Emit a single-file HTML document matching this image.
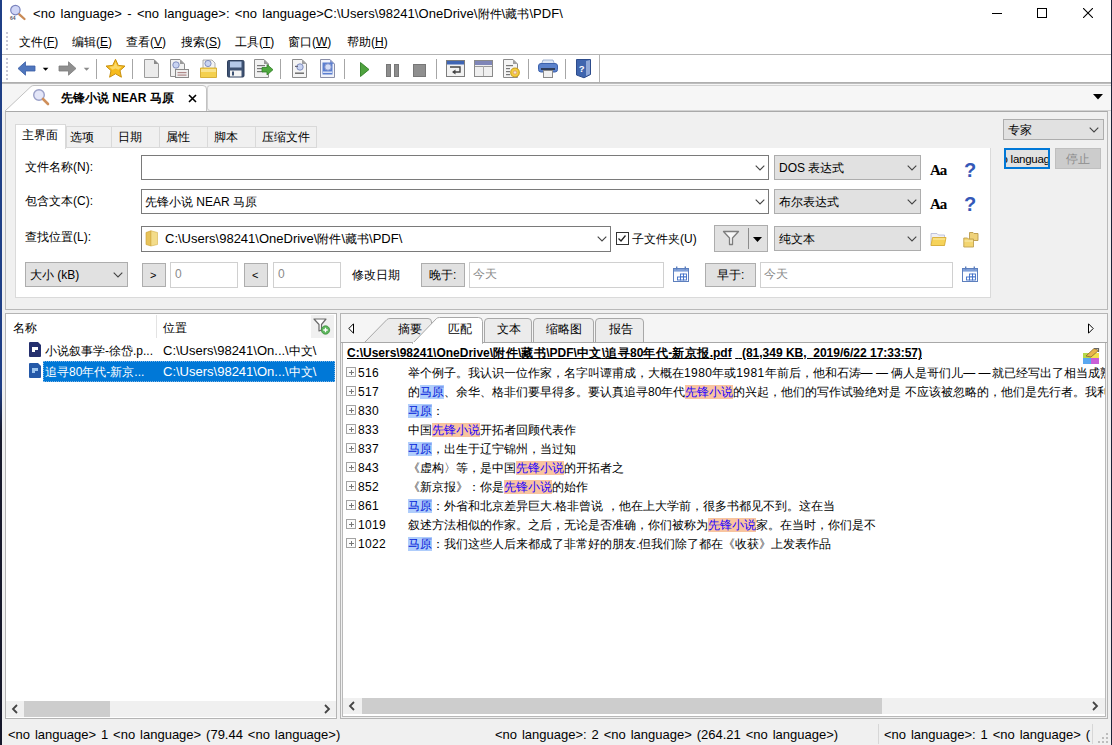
<!DOCTYPE html>
<html><head><meta charset="utf-8">
<style>
*{box-sizing:border-box;margin:0;padding:0}
html,body{width:1112px;height:745px;overflow:hidden;background:#fff}
body{position:relative;font-family:"Liberation Sans",sans-serif;font-size:12px;color:#000}
.a{position:absolute}
.t{position:absolute;white-space:nowrap;line-height:16px;height:16px}
.cb{position:absolute;background:#e1e1e1;border:1px solid #adadad}
.in{position:absolute;background:#fff;border:1px solid #7a7a7a}
.in2{position:absolute;background:#fff;border:1px solid #d0d0d0}
.btn{position:absolute;background:#e1e1e1;border:1px solid #adadad;text-align:center}
.chev{position:absolute;width:10px;height:6px}
.row{position:absolute;left:347px;height:19px;white-space:nowrap;font-size:12px;line-height:19px}
.hb{background:#afcdfb;color:#0018d8;font-weight:normal}
.ho{background:#f8c49f;color:#2200ff;font-weight:normal}
.pl{position:absolute;left:346px;width:10px;height:10px;border:1px solid #a3a3a3;background:#fcfcfc}
.pl:before{content:"";position:absolute;left:2px;top:3.500px;width:5px;height:1.500px;background:#777}
.pl:after{content:"";position:absolute;left:3.500px;top:2px;width:1.500px;height:5px;background:#777}
.num{position:absolute;left:358px;font-size:12px;line-height:14px;white-space:nowrap;letter-spacing:.3px}
.tx{position:absolute;left:408px;font-size:12px;line-height:15px;height:15px;white-space:nowrap}
i{font-style:normal;font-size:12px}
.k{letter-spacing:.45px}
</style></head><body>
<!-- window edges -->
<div class="a" style="left:0;top:0;width:2px;height:745px;background:linear-gradient(#1f3f86 0,#1f3f86 52%,#181a2c 58%,#15172a 100%)"></div>
<div class="a" style="left:1111px;top:0;width:1px;height:745px;background:#1b2438"></div>

<!-- title bar -->
<svg class="a" style="left:9px;top:4px" width="18" height="18" viewBox="0 0 18 18"><circle cx="6.400" cy="6.100" r="4.700" fill="#d0d6f6" stroke="#7a83bd" stroke-width="1.200"/><path d="M10.300 10.300 L15.500 15" stroke="#c98a55" stroke-width="2.300" stroke-linecap="round"/><text x="1" y="16" font-size="5" font-family="Liberation Sans" font-weight="bold" fill="#556">64</text></svg>
<div class="t" id="title" style="left:33px;top:5.500px;font-size:13px;letter-spacing:0.05px"><span style="word-spacing:1.6px">&lt;no language&gt; - &lt;no language&gt;: &lt;no language&gt;</span>C:\Users\98241\OneDrive\<i>附件</i>\<i>藏书</i>\PDF\</div>
<div class="a" style="left:992px;top:13px;width:10px;height:1px;background:#000"></div>
<div class="a" style="left:1037px;top:8px;width:10px;height:10px;border:1px solid #000"></div>
<svg class="a" style="left:1083px;top:8px" width="10" height="10"><path d="M0 0L10 10M10 0L0 10" stroke="#000" stroke-width="1.1"/></svg>

<!-- menu bar -->
<div class="a" style="left:6px;top:32px;width:2px;height:20px;background:repeating-linear-gradient(#c9c9d6 0,#c9c9d6 2px,#fff 2px,#fff 4px)"></div>
<div class="t" style="left:19px;top:34px">文件(<u>F</u>)</div>
<div class="t" style="left:72px;top:34px">编辑(<u>E</u>)</div>
<div class="t" style="left:126px;top:34px">查看(<u>V</u>)</div>
<div class="t" style="left:181px;top:34px">搜索(<u>S</u>)</div>
<div class="t" style="left:235px;top:34px">工具(<u>T</u>)</div>
<div class="t" style="left:288px;top:34px">窗口(<u>W</u>)</div>
<div class="t" style="left:347px;top:34px">帮助(<u>H</u>)</div>
<div class="a" style="left:2px;top:54px;width:1109px;height:1px;background:#b4b4b4"></div>

<!-- toolbar -->
<div class="a" style="left:2px;top:82px;width:1109px;height:2px;background:linear-gradient(#a8a8a8,#c4c4c4)"></div>
<div class="a" style="left:599px;top:55px;width:1px;height:27px;background:#b4b4b4"></div>
<div class="a" style="left:6px;top:58px;width:2px;height:22px;background:repeating-linear-gradient(#c9c9d6 0,#c9c9d6 2px,#fff 2px,#fff 4px)"></div>
<svg class="a" style="left:0;top:55px" width="600" height="27" viewBox="0 55 600 27">
<!-- back -->
<path d="M18 68.5L25.5 61.8V66H35V71H25.5V75.2Z" fill="#4f76bd" stroke="#3a5ea6" stroke-width=".8" stroke-linejoin="round"/>
<path d="M42.8 67.8H48.4L45.6 70.8Z" fill="#000"/>
<path d="M76 68.5L68.5 61.8V66H59V71H68.5V75.2Z" fill="#8f8f8f" stroke="#7c7c7c" stroke-width=".8" stroke-linejoin="round"/>
<path d="M83.8 67.8H89.4L86.6 70.8Z" fill="#8a8a8a"/>
<g fill="#a6a6a6"><rect x="96" y="59" width="1" height="20"/><rect x="132" y="59" width="1" height="20"/><rect x="280" y="59" width="1" height="20"/><rect x="344" y="59" width="1" height="20"/><rect x="436" y="59" width="1" height="20"/><rect x="528" y="59" width="1" height="20"/><rect x="565" y="59" width="1" height="20"/></g>
<!-- star -->
<path d="M115.5 59.3L118.3 65.4L125 66.1L120 70.6L121.4 77.2L115.5 73.8L109.6 77.2L111 70.6L106 66.1L112.7 65.4Z" fill="#f6bb1c" stroke="#c8900f" stroke-width="1" stroke-linejoin="round"/>
<path d="M115.5 62L117.4 66.3L121.8 66.8L118.5 69.8L115.5 68.5L112.5 69.8L109.2 66.8L113.6 66.3Z" fill="#fbd968"/>
<!-- new doc -->
<path d="M144.5 59.5H154L158.5 64V77.5H144.5Z" fill="#ececec" stroke="#9c9c9c"/><path d="M154 59.5V64H158.5Z" fill="#8a8a8a"/>
<!-- doc mag -->
<path d="M170.5 59.5H180L184.5 64V76.5H170.5Z" fill="#f1f1f1" stroke="#8e8e8e"/><path d="M180 59.5V64H184.5Z" fill="#9a9a9a"/>
<circle cx="176" cy="65" r="3.2" fill="#c9d4f2" stroke="#7785b8" stroke-width=".9"/>
<rect x="175.500" y="69.500" width="13" height="8" fill="#efefef" stroke="#8a8a8a"/><rect x="177.500" y="72" width="9" height="1.200" fill="#b08a8a"/><rect x="177.500" y="74.500" width="9" height="1.200" fill="#b08a8a"/>
<!-- folder mag -->
<path d="M203 60H212L215 63V70H203Z" fill="#f3f3f3" stroke="#999" stroke-width=".8"/>
<circle cx="208" cy="63.500" r="3.100" fill="#c9d4f2" stroke="#7785b8" stroke-width=".9"/>
<path d="M200.500 68H216.500V77.500H200.500Z" fill="#f4d04e" stroke="#d2a92c" stroke-width=".9"/><path d="M201 69H216V72H201Z" fill="#f9e38c"/>
<!-- save -->
<rect x="227.500" y="60.500" width="16.500" height="16.500" rx="1.200" fill="#3e5273" stroke="#2e3f5c"/>
<rect x="230" y="61.500" width="11.500" height="6" fill="#b4c8e8"/><rect x="230" y="70.500" width="11.500" height="6" fill="#f4f4f4"/><rect x="232" y="71.500" width="2" height="4" fill="#3e5273"/>
<!-- export -->
<path d="M254.500 59.500H264L268.500 64V77.500H254.500Z" fill="#f1f1f1" stroke="#8e8e8e"/><path d="M264 59.500V64H268.500Z" fill="#9a9a9a"/>
<rect x="257" y="65" width="8" height="1.200" fill="#777"/><rect x="257" y="68" width="6" height="1.200" fill="#777"/><rect x="257" y="71" width="6" height="1.200" fill="#777"/>
<path d="M262 67.500H267V64.500L273 69.700L267 75V72H262Z" fill="#4ea83e" stroke="#2f7f25" stroke-width=".8" stroke-linejoin="round"/>
<!-- preview 1 -->
<path d="M292.500 59.500H302L306.500 64V77.500H292.500Z" fill="#f4f4f4" stroke="#8a8a8a"/><path d="M302 59.500V64H306.500Z" fill="#a0a0a0"/>
<circle cx="300" cy="67" r="3.200" fill="#c9d4f2" stroke="#7785b8" stroke-width=".9"/><rect x="295" y="72.500" width="9" height="1.400" fill="#666"/><rect x="295" y="65.800" width="3" height="1.200" fill="#667"/>
<!-- preview 2 -->
<path d="M320.500 59.500H330L334.500 64V77.500H320.500Z" fill="#f1f3fa" stroke="#8a8fa8"/><path d="M330 59.500V64H334.500Z" fill="#8b9acb"/>
<rect x="322.500" y="62.500" width="10" height="12" fill="#5b7fd0"/><circle cx="328" cy="67" r="3.200" fill="#d4ddf6" stroke="#8795c8" stroke-width=".9"/><rect x="323" y="71.500" width="9" height="1.400" fill="#e4e9f8"/>
<!-- play pause stop -->
<path d="M360.500 62.500V76.500L369 69.500Z" fill="#4fa33f" stroke="#2f7f25" stroke-width=".9" stroke-linejoin="round"/>
<rect x="386.500" y="64.500" width="4" height="12" fill="#8d8d8d" stroke="#777"/><rect x="394.500" y="64.500" width="4" height="12" fill="#8d8d8d" stroke="#777"/>
<rect x="413.500" y="64.500" width="12" height="12" fill="#8f8f8f" stroke="#777"/>
<!-- window 1 -->
<rect x="446.500" y="60.500" width="18" height="16" fill="#f2f2f2" stroke="#7d7d7d"/><rect x="447" y="61" width="17" height="3.500" fill="#3f65b4"/>
<path d="M450 67H460V72H453" fill="none" stroke="#444" stroke-width="1.400"/><path d="M455.500 69.500L452 72L455.500 74.500Z" fill="#444"/>
<!-- window 2 -->
<rect x="474.500" y="60.500" width="18" height="16" fill="#f0f0f0" stroke="#8a8a8a"/><rect x="475" y="61" width="17" height="4" fill="#7f86b8"/><rect x="475" y="66" width="17" height="1" fill="#999"/><rect x="483" y="66" width="1" height="10" fill="#aaa"/>
<!-- doc gear -->
<path d="M503.500 59.500H513L517.500 64V77.500H503.500Z" fill="#f4f4f4" stroke="#8a8a8a"/><path d="M513 59.500V64H517.500Z" fill="#a0a0a0"/>
<rect x="506" y="65" width="7" height="1.200" fill="#777"/><rect x="506" y="68" width="4" height="1.200" fill="#777"/><rect x="506" y="71" width="4" height="1.200" fill="#777"/><rect x="506" y="74" width="4" height="1.200" fill="#777"/>
<circle cx="515" cy="72.500" r="4.300" fill="#f3cf3f" stroke="#d2a41f" stroke-width="1.200"/><circle cx="515" cy="72.500" r="1.700" fill="#f7e9c8" stroke="#d98b6a" stroke-width=".7"/>
<!-- printer -->
<path d="M543 60H553L554.500 64H541.500Z" fill="#dde6f4" stroke="#8ea2c8" stroke-width=".8"/>
<rect x="538.500" y="63.500" width="19" height="8.500" rx="2.500" fill="#5b82cc" stroke="#3d62ac"/><rect x="541" y="68" width="14" height="2" fill="#2e3e5c"/>
<rect x="543.500" y="70.500" width="9" height="7" fill="#f1f1f1" stroke="#8a8a8a"/>
<!-- help book -->
<path d="M576.500 59.500H590.500V74.500L584 77.800L576.500 75Z" fill="#3f65ae" stroke="#2d4c8c" stroke-linejoin="round"/><path d="M586 61L590 60V74L586 76Z" fill="#8fa8d8"/>
<text x="578.800" y="72" font-family="Liberation Sans" font-weight="bold" font-size="9.500" fill="#fff">?</text>
</svg>


<!-- tab strip -->
<div class="a" style="left:2px;top:84px;width:1109px;height:27px;background:#f5f5f5"></div>
<svg class="a" style="left:2px;top:84px" width="210" height="28" viewBox="0 0 210 28"><path d="M2.5 27.5 L29 2.5 Q30 1.5 32 1.5 L201 1.5 Q204.5 1.5 204.5 5 L204.5 27.5" fill="#fff" stroke="#c2c2c2" stroke-width="1"/></svg>
<div class="a" style="left:207px;top:85px;width:904px;height:26px;border:1px solid #d2d2d2;border-right:none;border-radius:3px 0 0 3px;background:#f6f6f6"></div>
<svg class="a" style="left:32px;top:88px" width="18" height="18" viewBox="0 0 18 18"><circle cx="7" cy="7" r="5.3" fill="#e4e6f8" stroke="#9aa0c8" stroke-width="1.4"/><path d="M11 11 L16 16" stroke="#cf8f5a" stroke-width="2.6" stroke-linecap="round"/></svg>
<div class="t" id="tabt" style="left:61px;top:90px;font-weight:bold;font-size:12px">先锋小说 NEAR 马原</div>
<svg class="a" style="left:188px;top:94px" width="9" height="9"><path d="M1 1L8 8M8 1L1 8" stroke="#000" stroke-width="1.6"/></svg>
<svg class="a" style="left:1093px;top:94px" width="10" height="6"><path d="M0 0H10L5 5.5Z" fill="#000"/></svg>

<!-- search panel -->
<div class="a" style="left:2px;top:111px;width:1109px;height:634px;background:#f0f0f0"></div>
<div class="a" style="left:5px;top:111px;width:1103px;height:199px;background:#f0f0f0;border:1px solid #b9b9b9;border-top:1px solid #a9a9a9"></div>
<div class="a" style="left:15px;top:148px;width:976px;height:150px;background:#fff;border:1px solid #dadada;border-top:none"></div>
<!-- inner tabs -->
<div class="a" style="left:66px;top:126px;width:251px;height:22px;background:#f0f0f0;border:1px solid #d9d9d9"></div>
<div class="a" style="left:111px;top:126px;width:1px;height:22px;background:#d9d9d9"></div>
<div class="a" style="left:159px;top:126px;width:1px;height:22px;background:#d9d9d9"></div>
<div class="a" style="left:207px;top:126px;width:1px;height:22px;background:#d9d9d9"></div>
<div class="a" style="left:255px;top:126px;width:1px;height:22px;background:#d9d9d9"></div>
<div class="a" style="left:15px;top:124px;width:51px;height:25px;background:#fff;border:1px solid #d9d9d9;border-bottom:none"></div>
<div class="t" style="left:22px;top:127px">主界面</div>
<div class="t" style="left:70px;top:129px">选项</div>
<div class="t" style="left:118px;top:129px">日期</div>
<div class="t" style="left:166px;top:129px">属性</div>
<div class="t" style="left:214px;top:129px">脚本</div>
<div class="t" style="left:262px;top:129px">压缩文件</div>

<!-- row 1 -->
<div class="t" style="left:25px;top:159px">文件名称(N):</div>
<div class="in" style="left:141px;top:155px;width:628px;height:25px"></div>
<div class="cb" style="left:774px;top:155px;width:147px;height:25px"></div>
<div class="t" style="left:779px;top:160px">DOS 表达式</div>
<!-- row 2 -->
<div class="t" style="left:25px;top:193px">包含文本(C):</div>
<div class="in" style="left:141px;top:189px;width:628px;height:25px"></div>
<div class="t" style="left:145px;top:194px">先锋小说 NEAR 马原</div>
<div class="cb" style="left:774px;top:189px;width:147px;height:25px"></div>
<div class="t" style="left:779px;top:194px">布尔表达式</div>
<!-- row 3 -->
<div class="t" style="left:25px;top:229px">查找位置(L):</div>
<div class="in" style="left:141px;top:226px;width:470px;height:26px"></div>
<svg class="a" style="left:145px;top:230px" width="14" height="17" viewBox="0 0 14 17"><path d="M1 2.5 L6 0.8 L6 16 L1 14.5Z" fill="#e8c35a" stroke="#c9a033" stroke-width=".6"/><path d="M6 0.8 L12.5 2.5 L12.5 14.5 L6 16Z" fill="#f3dc8a" stroke="#d3b04a" stroke-width=".6"/></svg>
<div class="t" id="loc" style="left:165px;top:231px;font-size:13px">C:\Users\98241\OneDrive\<i>附件</i>\<i>藏书</i>\PDF\</div>
<div class="a" style="left:616px;top:232px;width:13px;height:13px;border:1px solid #333;background:#fff"></div>
<svg class="a" style="left:617px;top:233px" width="11" height="11"><path d="M1.5 5.5L4 8L8.5 2.5" fill="none" stroke="#222" stroke-width="1.3"/></svg>
<div class="t" style="left:632px;top:231px">子文件夹(U)</div>
<div class="btn" style="left:714px;top:225px;width:54px;height:27px"></div>
<svg class="a" style="left:722px;top:230px" width="18" height="16" viewBox="0 0 18 16"><path d="M1.500 1.500H16.500L10.500 8V14.500H7.500V8Z" fill="#f7f7f7" stroke="#7d7d7d" stroke-width="1.300" stroke-linejoin="round"/></svg>
<div class="a" style="left:748px;top:228px;width:1px;height:21px;background:#8c8c8c"></div>
<svg class="a" style="left:753px;top:237px" width="9" height="5"><path d="M0 0H9L4.5 5Z" fill="#000"/></svg>
<div class="cb" style="left:774px;top:226px;width:147px;height:25px"></div>
<div class="t" style="left:779px;top:231px">纯文本</div>
<!-- row 4 -->
<div class="cb" style="left:25px;top:262px;width:103px;height:25px"></div>
<div class="t" style="left:30px;top:267px">大小 (kB)</div>
<div class="btn" style="left:142px;top:263px;width:24px;height:24px"></div>
<div class="t" style="left:150px;top:267px;font-size:11px">&gt;</div>
<div class="in2" style="left:170px;top:262px;width:68px;height:26px"></div>
<div class="t" style="left:175px;top:266px;color:#8a8a8a">0</div>
<div class="btn" style="left:244px;top:263px;width:24px;height:24px"></div>
<div class="t" style="left:252px;top:267px;font-size:11px">&lt;</div>
<div class="in2" style="left:273px;top:262px;width:68px;height:26px"></div>
<div class="t" style="left:278px;top:266px;color:#8a8a8a">0</div>
<div class="t" style="left:352px;top:267px">修改日期</div>
<div class="btn" style="left:421px;top:263px;width:44px;height:24px"></div>
<div class="t" style="left:429px;top:267px">晚于:</div>
<div class="in2" style="left:469px;top:262px;width:195px;height:26px"></div>
<div class="t" style="left:473px;top:266px;color:#8a8a8a">今天</div>
<div class="btn" style="left:705px;top:263px;width:51px;height:24px"></div>
<div class="t" style="left:717px;top:267px">早于:</div>
<div class="in2" style="left:760px;top:262px;width:193px;height:26px"></div>
<div class="t" style="left:764px;top:266px;color:#8a8a8a">今天</div>

<!-- right of panel -->
<div class="cb" style="left:1003px;top:119px;width:101px;height:21px"></div>
<div class="t" style="left:1008px;top:122px">专家</div>
<div class="a" style="left:1004px;top:148px;width:46px;height:21px;background:#e1e1e1;border:2px solid #0078d7;overflow:hidden"><div class="t" style="left:-4.500px;top:1px;font-size:11.500px;letter-spacing:-.25px">o language</div></div>
<div class="a" style="left:1055px;top:148px;width:46px;height:21px;background:#cccccc;border:1px solid #bfbfbf"></div>
<div class="t" style="left:1066px;top:151px;color:#8c8c8c">停止</div>
<div class="t" style="left:930px;top:162px;font-family:'Liberation Serif',serif;font-weight:bold;font-size:15px;letter-spacing:-1px">Aa</div>
<div class="t" style="left:930px;top:196px;font-family:'Liberation Serif',serif;font-weight:bold;font-size:15px;letter-spacing:-1px">Aa</div>
<div class="t" style="left:964px;top:162px;font-weight:bold;font-size:20px;color:#3558b8">?</div>
<div class="t" style="left:964px;top:196px;font-weight:bold;font-size:20px;color:#3558b8">?</div>

<svg class="a" style="left:755px;top:165px" width="10" height="6"><path d="M.7 .7L5 5L9.300 .7" fill="none" stroke="#444" stroke-width="1.100"/></svg>
<svg class="a" style="left:907px;top:165px" width="10" height="6"><path d="M.7 .7L5 5L9.300 .7" fill="none" stroke="#444" stroke-width="1.100"/></svg>
<svg class="a" style="left:755px;top:199px" width="10" height="6"><path d="M.7 .7L5 5L9.300 .7" fill="none" stroke="#444" stroke-width="1.100"/></svg>
<svg class="a" style="left:907px;top:199px" width="10" height="6"><path d="M.7 .7L5 5L9.300 .7" fill="none" stroke="#444" stroke-width="1.100"/></svg>
<svg class="a" style="left:597px;top:236px" width="10" height="6"><path d="M.7 .7L5 5L9.300 .7" fill="none" stroke="#444" stroke-width="1.100"/></svg>
<svg class="a" style="left:907px;top:236px" width="10" height="6"><path d="M.7 .7L5 5L9.300 .7" fill="none" stroke="#444" stroke-width="1.100"/></svg>
<svg class="a" style="left:113px;top:272px" width="10" height="6"><path d="M.7 .7L5 5L9.300 .7" fill="none" stroke="#444" stroke-width="1.100"/></svg>
<svg class="a" style="left:1089px;top:127px" width="10" height="6"><path d="M.7 .7L5 5L9.300 .7" fill="none" stroke="#444" stroke-width="1.100"/></svg>
<svg class="a" style="left:673px;top:266px" width="17" height="17" viewBox="0 0 17 17"><rect x=".5" y="2.500" width="15" height="13" fill="#fbfcfe" stroke="#5d7fbd"/><rect x="1" y="3" width="14" height="2.600" fill="#7f9fd8"/><rect x="3" y=".5" width="1.400" height="3" fill="#5d7fbd"/><rect x="11.600" y=".5" width="1.400" height="3" fill="#5d7fbd"/><g fill="#fff" stroke="#3f6fc8" stroke-width=".9"><rect x="7.500" y="8" width="3" height="3"/><rect x="10.500" y="8" width="3" height="3"/><rect x="4.500" y="11" width="3" height="3"/><rect x="7.500" y="11" width="3" height="3"/><rect x="10.500" y="11" width="3" height="3"/></g></svg>
<svg class="a" style="left:962px;top:266px" width="17" height="17" viewBox="0 0 17 17"><rect x=".5" y="2.500" width="15" height="13" fill="#fbfcfe" stroke="#5d7fbd"/><rect x="1" y="3" width="14" height="2.600" fill="#7f9fd8"/><rect x="3" y=".5" width="1.400" height="3" fill="#5d7fbd"/><rect x="11.600" y=".5" width="1.400" height="3" fill="#5d7fbd"/><g fill="#fff" stroke="#3f6fc8" stroke-width=".9"><rect x="7.500" y="8" width="3" height="3"/><rect x="10.500" y="8" width="3" height="3"/><rect x="4.500" y="11" width="3" height="3"/><rect x="7.500" y="11" width="3" height="3"/><rect x="10.500" y="11" width="3" height="3"/></g></svg>
<svg class="a" style="left:930px;top:231px" width="17" height="16" viewBox="0 0 17 16"><path d="M1 2.500H7L8.500 4H14.500V14.500H1Z" fill="#f0f0f6" stroke="#b9bdd8" stroke-width=".9"/><path d="M1 14.500L2.500 6.500H16L14.500 14.500Z" fill="#f6d35a" stroke="#d8ae35" stroke-width=".9" stroke-linejoin="round"/><path d="M3 8H15" stroke="#fbe9a0" stroke-width="1.200"/></svg>
<svg class="a" style="left:963px;top:231px" width="16" height="17" viewBox="0 0 16 17"><path d="M6.500 1.500H10L11 2.500H15V9.500H6.500Z" fill="#efd27a" stroke="#b99a4a" stroke-width=".9"/><path d="M.8 7H4.500L5.500 8H10.500V16H.8Z" fill="#f3d570" stroke="#c0a050" stroke-width=".9"/><path d="M1.500 10H10" stroke="#f9e9a8" stroke-width="1.200"/></svg>
<!-- list panel -->
<div class="a" style="left:5px;top:313px;width:332px;height:406px;background:#fff;border:1px solid #b4b4b4"></div>
<div class="a" style="left:156px;top:315px;width:1px;height:23px;background:#e3e3e3"></div>
<div class="t" style="left:13px;top:320px">名称</div>
<div class="t" style="left:163px;top:320px">位置</div>
<div class="a" style="left:311px;top:315px;width:23px;height:23px;background:#f0f0f0"></div>
<svg class="a" style="left:313px;top:318px" width="18" height="17" viewBox="0 0 18 17"><path d="M1 1H13L8.5 6.5V12L6 13V6.5Z" fill="#fff" stroke="#6a6a6a" stroke-width="1.2" stroke-linejoin="round"/><circle cx="12.5" cy="12" r="4.2" fill="#5cb55c" stroke="#3d8f3d" stroke-width=".8"/><path d="M10.3 12H14.7M12.5 9.8V14.2" stroke="#fff" stroke-width="1.3"/></svg>
<div class="a" style="left:29px;top:342px;width:12px;height:15px;background:#25306e;border-radius:1px"></div>
<div class="a" style="left:32px;top:347px;width:6px;height:5px;background:#fff"></div>
<div class="a" style="left:35px;top:350px;width:3px;height:2px;background:#25306e"></div><div class="a" style="left:38px;top:342px;width:0;height:0;border-left:3px solid transparent;border-top:3px solid #fff"></div>
<div class="t" style="left:45px;top:343px">小说叙事学-徐岱.p...</div>
<div class="t" id="p1" style="left:163px;top:343px;font-size:13px">C:\Users\98241\On...\<i>中文</i>\</div>
<div class="a" style="left:43px;top:361px;width:292px;height:21px;background:#0078d7;border:1px dotted #7fb4e4"></div>
<div class="a" style="left:29px;top:363px;width:12px;height:15px;background:#2458a8;border-radius:1px"></div>
<div class="a" style="left:32px;top:368px;width:6px;height:5px;background:#9cc4ee"></div>
<div class="a" style="left:35px;top:371px;width:3px;height:2px;background:#2458a8"></div><div class="a" style="left:38px;top:363px;width:0;height:0;border-left:3px solid transparent;border-top:3px solid #fff"></div>
<div class="t" style="left:45px;top:364px;color:#fff">追寻80年代-新京...</div>
<div class="t" id="p2" style="left:163px;top:364px;color:#fff;font-size:13px">C:\Users\98241\On...\<i>中文</i>\</div>
<!-- list scrollbar -->
<div class="a" style="left:6px;top:701px;width:330px;height:16px;background:#f0f0f0"></div>
<div class="a" style="left:24px;top:701px;width:86px;height:16px;background:#cdcdcd"></div>
<svg class="a" style="left:11px;top:704px" width="8" height="10"><path d="M6 1L2 5L6 9" fill="none" stroke="#444" stroke-width="1.8"/></svg>
<svg class="a" style="left:323px;top:704px" width="8" height="10"><path d="M2 1L6 5L2 9" fill="none" stroke="#444" stroke-width="1.8"/></svg>

<!-- result panel -->
<div class="a" style="left:340px;top:313px;width:768px;height:406px;background:#f0f0f0;border:1px solid #b4b4b4"></div>
<div class="a" style="left:342px;top:342px;width:764px;height:375px;background:#fff;border:1px solid #b9b9b9"></div>
<svg class="a" style="left:341px;top:314px" width="766" height="30" viewBox="341 314 766 30">
<rect x="341" y="314" width="766" height="29" fill="#f5f5f5"/>
<path d="M364.500 342.500L387 319.500Q388 318.500 390 318.500H428Q431.500 318.500 431.500 322V342.500Z" fill="#ececec" stroke="#a8a8a8"/>
<path d="M484.500 342.500V322Q484.500 318.500 488 318.500H528Q531.500 318.500 531.500 322V342.500Z" fill="#ececec" stroke="#a8a8a8"/>
<path d="M533.500 342.500V322Q533.500 318.500 537 318.500H590Q593.500 318.500 593.500 322V342.500Z" fill="#ececec" stroke="#a8a8a8"/>
<path d="M595.500 342.500V322Q595.500 318.500 599 318.500H640Q643.500 318.500 643.500 322V342.500Z" fill="#ececec" stroke="#a8a8a8"/>
<path d="M341 342.500H1107" stroke="#a8a8a8"/>
<path d="M412.500 343.500L436.500 318.500Q437.500 317.500 439.500 317.500H478.500Q482.500 317.500 482.500 321.500V343.500Z" fill="#fff" stroke="#a8a8a8"/>
<rect x="413" y="342" width="69" height="2" fill="#fff"/>
</svg>
<div class="t" style="left:398px;top:321px">摘要</div>
<div class="t" style="left:448px;top:321px">匹配</div>
<div class="t" style="left:497px;top:321px">文本</div>
<div class="t" style="left:546px;top:321px">缩略图</div>
<div class="t" style="left:609px;top:321px">报告</div>

<svg class="a" style="left:348px;top:323px" width="6" height="11"><path d="M5.5 .8V10.2L.8 5.5Z" fill="#fff" stroke="#000" stroke-width="1"/></svg>
<svg class="a" style="left:1088px;top:323px" width="6" height="11"><path d="M.5 .8V10.2L5.2 5.5Z" fill="#fff" stroke="#000" stroke-width="1"/></svg>
<div class="t" id="hdr" style="left:347px;top:346px;font-weight:bold;font-size:12px;text-decoration:underline;line-height:15px;height:15px">C:\Users\98241\OneDrive\<i class="k">附件</i>\<i class="k">藏书</i>\PDF\<i class="k">中文</i>\<i class="k">追寻</i>80<i class="k">年代</i>-<i class="k">新京报</i>.pdf<span style="padding-left:3.5px">&nbsp;</span> (81,349 KB,&nbsp; 2019/6/22 17:33:57)</div>
<svg class="a" style="left:1083px;top:347px" width="17" height="17" viewBox="0 0 17 17"><rect x="0" y="6" width="8" height="5" fill="#b7d94a"/><rect x="8" y="6" width="8" height="5" fill="#f4e24e"/><rect x="0" y="11" width="8" height="6" fill="#5aa8f0"/><rect x="8" y="11" width="8" height="6" fill="#c95fd8"/><path d="M3 9L11 1.500L15.500 3.500L8 10Z" fill="#e8b64c" stroke="#8a6a2a" stroke-width=".8"/><path d="M11 1.500H15.500V5" fill="none" stroke="#666" stroke-width="1.200"/></svg>
<div class="a" style="left:343px;top:343px;width:762px;height:355px;overflow:hidden"><div class="a" style="left:-343px;top:-343px">
<div class="pl" style="top:367px"></div><div class="num" style="top:366px">516</div><div class="tx" style="top:366px">举个例子。我认识一位作家，名字叫谭甫成，大概在<span style="letter-spacing:.4px">1980</span>年或<span style="letter-spacing:.4px">1981</span>年前后，他和石涛— — 俩人是哥们儿— —<span style="padding-left:1.500px"></span>就已经写出了相当成熟</div>
<div class="pl" style="top:386px"></div><div class="num" style="top:385px">517</div><div class="tx" style="top:385px">的<b class="hb">马原</b>、余华、格非们要早得多。要认真追寻80年代<b class="ho">先锋小说</b>的兴起，他们的写作试验绝对是 不应该被忽略的，他们是先行者。我利</div>
<div class="pl" style="top:405px"></div><div class="num" style="top:404px">830</div><div class="tx" style="top:404px"><b class="hb">马原</b>：</div>
<div class="pl" style="top:424px"></div><div class="num" style="top:423px">833</div><div class="tx" style="top:423px">中国<b class="ho">先锋小说</b>开拓者回顾代表作</div>
<div class="pl" style="top:443px"></div><div class="num" style="top:442px">837</div><div class="tx" style="top:442px"><b class="hb">马原</b>，出生于辽宁锦州，当过知</div>
<div class="pl" style="top:462px"></div><div class="num" style="top:461px">843</div><div class="tx" style="top:461px">《虚构〉等，是中国<b class="ho">先锋小说</b>的开拓者之</div>
<div class="pl" style="top:481px"></div><div class="num" style="top:480px">852</div><div class="tx" style="top:480px">《新京报》：你是<b class="ho">先锋小说</b>的始作</div>
<div class="pl" style="top:500px"></div><div class="num" style="top:499px">861</div><div class="tx" style="top:499px"><b class="hb">马原</b>：外省和北京差异巨大.格非曾说 ，他在上大学前，很多书都见不到。这在当</div>
<div class="pl" style="top:519px"></div><div class="num" style="top:518px">1019</div><div class="tx" style="top:518px">叙述方法相似的作家。之后，无论是否准确，你们被称为<b class="ho">先锋小说</b>家。在当时，你们是不</div>
<div class="pl" style="top:538px"></div><div class="num" style="top:537px">1022</div><div class="tx" style="top:537px"><b class="hb">马原</b>：我们这些人后来都成了非常好的朋友.但我们除了都在《收获》上发表作品</div>
</div></div>

<!-- result scrollbar -->
<div class="a" style="left:343px;top:698px;width:762px;height:16px;background:#f0f0f0"></div>
<div class="a" style="left:362px;top:698px;width:520px;height:16px;background:#cdcdcd"></div>
<svg class="a" style="left:348px;top:701px" width="8" height="10"><path d="M6 1L2 5L6 9" fill="none" stroke="#444" stroke-width="1.8"/></svg>
<svg class="a" style="left:1091px;top:701px" width="8" height="10"><path d="M2 1L6 5L2 9" fill="none" stroke="#444" stroke-width="1.8"/></svg>

<!-- status bar -->
<div class="a" style="left:2px;top:721px;width:1109px;height:24px;background:#f0f0f0"></div>
<div class="t" id="s1" style="left:8px;top:727px;font-size:13px;word-spacing:1.3px">&lt;no language&gt; 1 &lt;no language&gt; (79.44 &lt;no language&gt;)</div>
<div class="t" id="s2" style="left:495px;top:727px;font-size:13px;word-spacing:1.3px">&lt;no language&gt;: 2 &lt;no language&gt; (264.21 &lt;no language&gt;)</div>
<div class="a" style="left:878px;top:724px;width:1px;height:20px;background:#d7d7d7"></div>
<div class="a" style="left:884px;top:727px;width:208px;height:16px;overflow:hidden"><div class="t" id="s3" style="left:0;top:0;font-size:13px;word-spacing:1.3px">&lt;no language&gt;: 1 &lt;no language&gt; (</div></div>
<div class="a" style="left:1092px;top:724px;width:1px;height:20px;background:#d7d7d7"></div>
<svg class="a" style="left:1097px;top:732px" width="12" height="12"><g fill="#bdbdbd"><rect x="9" y="1" width="2" height="2"/><rect x="5" y="5" width="2" height="2"/><rect x="9" y="5" width="2" height="2"/><rect x="1" y="9" width="2" height="2"/><rect x="5" y="9" width="2" height="2"/><rect x="9" y="9" width="2" height="2"/></g></svg>
</body></html>
